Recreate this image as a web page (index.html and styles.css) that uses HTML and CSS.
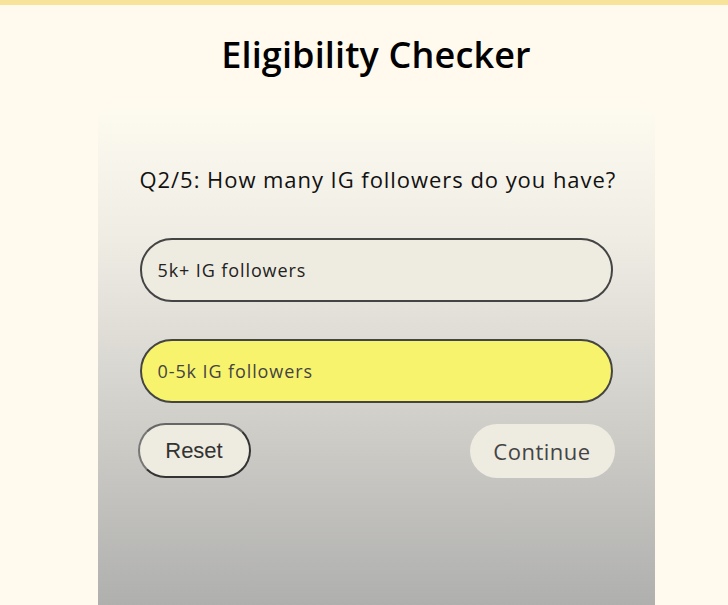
FILE: index.html
```html
<!DOCTYPE html>
<html lang="en">
<head>
<meta charset="utf-8">
<title>Eligibility Checker</title>
<link rel="stylesheet" href="styles.css">
</head>
<body>
<main class="page">
  <h1 class="title">Eligibility Checker</h1>
  <section class="card">
    <p class="question">Q2/5: How many IG followers do you have?</p>
    <div class="options">
      <button class="option">5k+ IG followers</button>
      <button class="option option--selected">0-5k IG followers</button>
    </div>
    <div class="actions">
      <button class="btn-reset">Reset</button>
      <button class="btn-continue">Continue</button>
    </div>
  </section>
</main>
</body>
</html>
```
FILE: styles.css
```css
html, body {
  margin: 0;
  padding: 0;
  height: 100%;
}
body {
  background: #fffaed;
  border-top: 5px solid #f8e39b;
  box-sizing: border-box;
  font-family: "Open Sans", "Noto Sans", sans-serif;
  color: #111;
  overflow: hidden;
}
.page {
  padding-left: 24px;
  display: flex;
  flex-direction: column;
  align-items: center;
}
.title {
  margin: 28px 0 0;
  font-size: 36px;
  font-weight: 600;
  letter-spacing: 0.15px;
  line-height: 44px;
  color: #000;
}
.card {
  margin-top: 33px;
  width: 557px;
  height: 520px;
  box-sizing: border-box;
  padding: 0 42px;
  border-radius: 8px 8px 0 0;
  background: linear-gradient(#fdfaf0 0%, #efece4 25%, #cbcac5 65%, #ababab 100%);
}
.question {
  margin: 54px 0 0;
  font-size: 22px;
  letter-spacing: 0.95px;
  line-height: 30px;
  color: #111;
  text-align: center;
  white-space: nowrap;
}
.options {
  margin-top: 44px;
  display: flex;
  flex-direction: column;
  gap: 37px;
}
.option {
  height: 64px;
  border: 2px solid #444;
  border-radius: 32px;
  background: #eeebe0;
  padding: 0 16px;
  text-align: left;
  font-family: "Open Sans", "Noto Sans", sans-serif;
  font-size: 18px;
  letter-spacing: 0.9px;
  color: #222;
}
.option--selected {
  background: #f8f36c;
  color: #444;
}
.actions {
  margin: 20px -2px 0;
  display: flex;
  justify-content: space-between;
  align-items: center;
}
.btn-reset {
  width: 113px;
  height: 55px;
  border: 2px solid #333;
  border-left-color: #777;
  border-top-color: #666;
  border-radius: 28px;
  background: #eeebe0;
  font-family: "Liberation Sans", Arial, sans-serif;
  font-size: 22px;
  color: #333;
}
.btn-continue {
  width: 145px;
  height: 54px;
  border: none;
  border-radius: 27px;
  background: #eeebe0;
  font-family: "Open Sans", "Noto Sans", sans-serif;
  font-size: 22px;
  letter-spacing: 0.5px;
  color: #444;
}
```
